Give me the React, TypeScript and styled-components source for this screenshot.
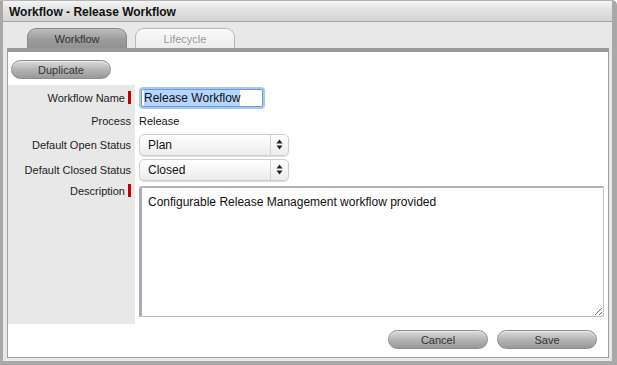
import styled, { createGlobalStyle } from 'styled-components';

const FORM_ROWS = [
  { label: 'Workflow Name', required: true, kind: 'text', value: 'Release Workflow', height: 25 },
  { label: 'Process', required: false, kind: 'plain', value: 'Release', height: 22 },
  { label: 'Default Open Status', required: false, kind: 'select', value: 'Plan', height: 25 },
  { label: 'Default Closed Status', required: false, kind: 'select', value: 'Closed', height: 25 },
  {
    label: 'Description',
    required: true,
    kind: 'area',
    value: 'Configurable Release Management workflow provided',
    height: 142,
  },
];

const GlobalStyle = createGlobalStyle`
  html, body {
    margin: 0;
    padding: 0;
    background: #ffffff;
  }
  * {
    box-sizing: border-box;
  }
`;

const SelectArrows = () => (
  <svg width="7" height="11" viewBox="0 0 7 11">
    <path d="M3.5 0.5 L6.5 4.5 L0.5 4.5 Z" fill="#222" />
    <path d="M3.5 10.5 L6.5 6.5 L0.5 6.5 Z" fill="#222" />
  </svg>
);

const renderField = (kind: string, value: string) => {
  switch (kind) {
    case 'text':
      return (
        <StyledTextField>
          <StyledSelection>{value}</StyledSelection>
        </StyledTextField>
      );
    case 'select':
      return (
        <StyledSelect>
          <StyledSelectValue>{value}</StyledSelectValue>
          <StyledSelectArrow>
            <SelectArrows />
          </StyledSelectArrow>
        </StyledSelect>
      );
    case 'area':
      return <StyledTextArea defaultValue={value} spellCheck={false} />;
    default:
      return <StyledPlainValue>{value}</StyledPlainValue>;
  }
};

export default function App() {
  return (
    <>
      <GlobalStyle />
      <StyledWindow>
        <StyledTitleBar>Workflow - Release Workflow</StyledTitleBar>
        <StyledTabRow>
          <StyledTab active={true}>Workflow</StyledTab>
          <StyledTab active={false}>Lifecycle</StyledTab>
        </StyledTabRow>
        <StyledPanel>
          <StyledToolbar>
            <StyledButton>Duplicate</StyledButton>
          </StyledToolbar>
          <StyledForm>
            {FORM_ROWS.map(({ label, required, kind, value, height }, i) => (
              <StyledFormRow key={i} style={{ height }}>
                <StyledLabelCell>
                  <StyledLabel top={kind === 'area'}>
                    {label}
                    {required ? <StyledRequired /> : <StyledRequiredSpace />}
                  </StyledLabel>
                </StyledLabelCell>
                <StyledFieldCell top={kind === 'area'}>{renderField(kind, value)}</StyledFieldCell>
              </StyledFormRow>
            ))}
          </StyledForm>
          <StyledFooter>
            <StyledButton>Cancel</StyledButton>
            <StyledButton>Save</StyledButton>
          </StyledFooter>
        </StyledPanel>
      </StyledWindow>
    </>
  );
}

const StyledWindow = styled.div`
  width: 617px;
  height: 365px;
  display: flex;
  flex-direction: column;
  background: #e8e8e8;
  border-top: 1px solid #b4b4b4;
  border-left: 3px solid #a8a8a8;
  border-right: 5px solid #a8a8a8;
  border-bottom: 4px solid #a8a8a8;
  border-top-right-radius: 5px;
  font-family: 'Liberation Sans', Arial, sans-serif;
  color: #111;
`;

const StyledTitleBar = styled.div`
  height: 21px;
  flex: none;
  display: flex;
  align-items: center;
  padding-left: 6px;
  padding-top: 1px;
  font-size: 12px;
  font-weight: bold;
  color: #111;
  background: linear-gradient(#f4f4f4, #e2e2e2 45%, #d4d4d4);
  border-bottom: 1px solid #a4a4a4;
`;

const StyledTabRow = styled.div`
  height: 26px;
  flex: none;
  display: flex;
  align-items: flex-end;
  gap: 8px;
  padding-left: 24px;
`;

const StyledTab = styled.div<{ active: boolean }>`
  width: 100px;
  height: 20px;
  display: flex;
  align-items: center;
  justify-content: center;
  font-size: 11px;
  border-radius: 9px 9px 0 0;
  border: 1px solid ${(p) => (p.active ? '#8a8a8a' : '#b8b8b8')};
  border-bottom: none;
  color: ${(p) => (p.active ? '#333' : '#9a9a9a')};
  background: ${(p) =>
    p.active ? 'linear-gradient(#bdbdbd, #9c9c9c 55%, #929292)' : 'linear-gradient(#fafafa, #ececec)'};
`;

const StyledPanel = styled.div`
  flex: 1;
  display: flex;
  flex-direction: column;
  margin: 0 3px 3px 4px;
  background: #ffffff;
  border-top: 4px solid #9a9a9a;
  border-left: 1px solid #a0a0a0;
  border-right: 1px solid #a0a0a0;
  border-bottom: 1px solid #a0a0a0;
`;

const StyledToolbar = styled.div`
  display: flex;
  padding: 8px 0 0 3px;
  height: 33px;
`;

const StyledButton = styled.button`
  width: 100px;
  height: 19px;
  padding: 0;
  border: 1px solid #8c8c8c;
  border-radius: 10px;
  font-family: 'Liberation Sans', Arial, sans-serif;
  font-size: 11px;
  color: #333;
  background: linear-gradient(#dcdcdc, #b4b4b4 50%, #999999);
  box-shadow: inset 0 1px 0 rgba(255, 255, 255, 0.5);
`;

const StyledForm = styled.div`
  display: flex;
  flex-direction: column;
`;

const StyledFormRow = styled.div`
  display: flex;
`;

const StyledLabelCell = styled.div`
  width: 127px;
  flex: none;
  background: #e8e8e8;
  display: flex;
  justify-content: flex-end;
`;

const StyledLabel = styled.div<{ top: boolean }>`
  display: flex;
  align-items: center;
  align-self: ${(p) => (p.top ? 'flex-start' : 'center')};
  margin-top: ${(p) => (p.top ? '2px' : '0')};
  gap: 3px;
  font-size: 11px;
  color: #222;
  padding-right: 4px;
`;

const StyledRequired = styled.span`
  width: 3px;
  height: 13px;
  background: #c40000;
`;

const StyledRequiredSpace = styled.span`
  width: 0;
  margin-left: -3px;
`;

const StyledFieldCell = styled.div<{ top: boolean }>`
  flex: 1;
  display: flex;
  align-items: ${(p) => (p.top ? 'flex-start' : 'center')};
  padding: ${(p) => (p.top ? '4px 3px 0 4px' : '0 3px 0 4px')};
`;

const StyledTextField = styled.div`
  width: 122px;
  height: 18px;
  display: flex;
  align-items: center;
  padding-left: 2px;
  border: 1px solid #6d9bd6;
  box-shadow: 0 0 0 2px #a9c7ee;
  border-radius: 2px;
  background: #fff;
  font-size: 12px;
  margin-left: 2px;
`;

const StyledSelection = styled.span`
  background: #b5d5fd;
  padding: 1px 0;
`;

const StyledPlainValue = styled.div`
  font-size: 11px;
  color: #111;
`;

const StyledSelect = styled.div`
  width: 150px;
  height: 22px;
  display: flex;
  align-items: center;
  border: 1px solid #cfcfcf;
  border-radius: 5px;
  background: linear-gradient(#ffffff, #f6f6f6 50%, #ececec);
  box-shadow: 0 1px 1px rgba(0, 0, 0, 0.15);
  font-size: 12px;
`;

const StyledSelectValue = styled.span`
  flex: 1;
  padding-left: 8px;
`;

const StyledSelectArrow = styled.span`
  width: 18px;
  height: 100%;
  display: flex;
  align-items: center;
  justify-content: center;
  border-left: 1px solid #d4d4d4;
`;

const StyledTextArea = styled.textarea`
  width: 465px;
  height: 131px;
  margin: 0;
  padding: 7px 6px;
  resize: both;
  font-family: 'Liberation Sans', Arial, sans-serif;
  font-size: 12px;
  color: #111;
  border-top: 2px solid #b0b4b8;
  border-left: 3px solid #a8aeb6;
  border-right: 1px solid #c8c8c8;
  border-bottom: 1px solid #c0c0c0;
  border-radius: 3px 0 0 0;
  outline: none;
`;

const StyledFooter = styled.div`
  display: flex;
  justify-content: flex-end;
  gap: 9px;
  padding: 6px 11px 0 0;
`;
